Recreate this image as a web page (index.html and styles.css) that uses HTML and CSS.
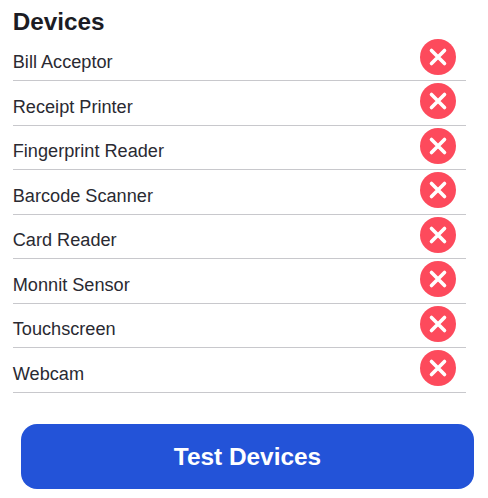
FILE: index.html
```html
<!DOCTYPE html>
<html lang="en">
<head>
    <meta charset="UTF-8">
    <title>Devices</title>
    <link rel="stylesheet" href="styles.css">
</head>
<body>
    <div class="container">
        <h2>Devices</h2>

        <div class="device-list">
            <div class="device-row">
                <span class="device-name">Bill Acceptor</span>
                <svg class="status-icon" viewBox="0 0 36 36"><circle cx="18" cy="18" r="18"/><path d="M11.5 11.5 L24.5 24.5 M24.5 11.5 L11.5 24.5"/></svg>
            </div>
            <div class="device-row">
                <span class="device-name">Receipt Printer</span>
                <svg class="status-icon" viewBox="0 0 36 36"><circle cx="18" cy="18" r="18"/><path d="M11.5 11.5 L24.5 24.5 M24.5 11.5 L11.5 24.5"/></svg>
            </div>
            <div class="device-row">
                <span class="device-name">Fingerprint Reader</span>
                <svg class="status-icon" viewBox="0 0 36 36"><circle cx="18" cy="18" r="18"/><path d="M11.5 11.5 L24.5 24.5 M24.5 11.5 L11.5 24.5"/></svg>
            </div>
            <div class="device-row">
                <span class="device-name">Barcode Scanner</span>
                <svg class="status-icon" viewBox="0 0 36 36"><circle cx="18" cy="18" r="18"/><path d="M11.5 11.5 L24.5 24.5 M24.5 11.5 L11.5 24.5"/></svg>
            </div>
            <div class="device-row">
                <span class="device-name">Card Reader</span>
                <svg class="status-icon" viewBox="0 0 36 36"><circle cx="18" cy="18" r="18"/><path d="M11.5 11.5 L24.5 24.5 M24.5 11.5 L11.5 24.5"/></svg>
            </div>
            <div class="device-row">
                <span class="device-name">Monnit Sensor</span>
                <svg class="status-icon" viewBox="0 0 36 36"><circle cx="18" cy="18" r="18"/><path d="M11.5 11.5 L24.5 24.5 M24.5 11.5 L11.5 24.5"/></svg>
            </div>
            <div class="device-row">
                <span class="device-name">Touchscreen</span>
                <svg class="status-icon" viewBox="0 0 36 36"><circle cx="18" cy="18" r="18"/><path d="M11.5 11.5 L24.5 24.5 M24.5 11.5 L11.5 24.5"/></svg>
            </div>
            <div class="device-row">
                <span class="device-name">Webcam</span>
                <svg class="status-icon" viewBox="0 0 36 36"><circle cx="18" cy="18" r="18"/><path d="M11.5 11.5 L24.5 24.5 M24.5 11.5 L11.5 24.5"/></svg>
            </div>
        </div>

        <button class="button">Test Devices</button>
    </div>
</body>
</html>
```

FILE: styles.css
```css
html, body {
    margin: 0;
    height: 100%;
    overflow: hidden;
}

body {
    font-family: "Liberation Sans", Arial, sans-serif;
    background-color: #fff;
    color: #2a2a32;
}

.container {
    padding: 8px 14px 0 12.75px;
}

h2 {
    margin: 0;
    height: 28px;
    font-size: 24.3px;
    line-height: 28px;
    font-weight: bold;
    color: #1c1c24;
}

.device-list {
    width: 453px;
    padding-top: 0.5px;
}

.device-row {
    display: flex;
    justify-content: space-between;
    height: 43.5px;
    border-bottom: 1px solid #c8c8cc;
}

.device-name {
    font-size: 18.15px;
    line-height: 21px;
    margin-top: 15.5px;
}

.status-icon {
    width: 36px;
    height: 36px;
    margin: 2px 10px 0 0;
}

.status-icon circle {
    fill: #fd4a5c;
}

.status-icon path {
    fill: none;
    stroke: #fff;
    stroke-width: 3.6;
    stroke-linecap: round;
}

.button {
    display: block;
    width: 453px;
    height: 65px;
    margin: 31.5px 0 0 8.25px;
    padding: 0;
    background-color: #2353d8;
    color: #fff;
    border: none;
    border-radius: 16px;
    font-family: inherit;
    font-size: 24.4px;
    font-weight: bold;
}
```
